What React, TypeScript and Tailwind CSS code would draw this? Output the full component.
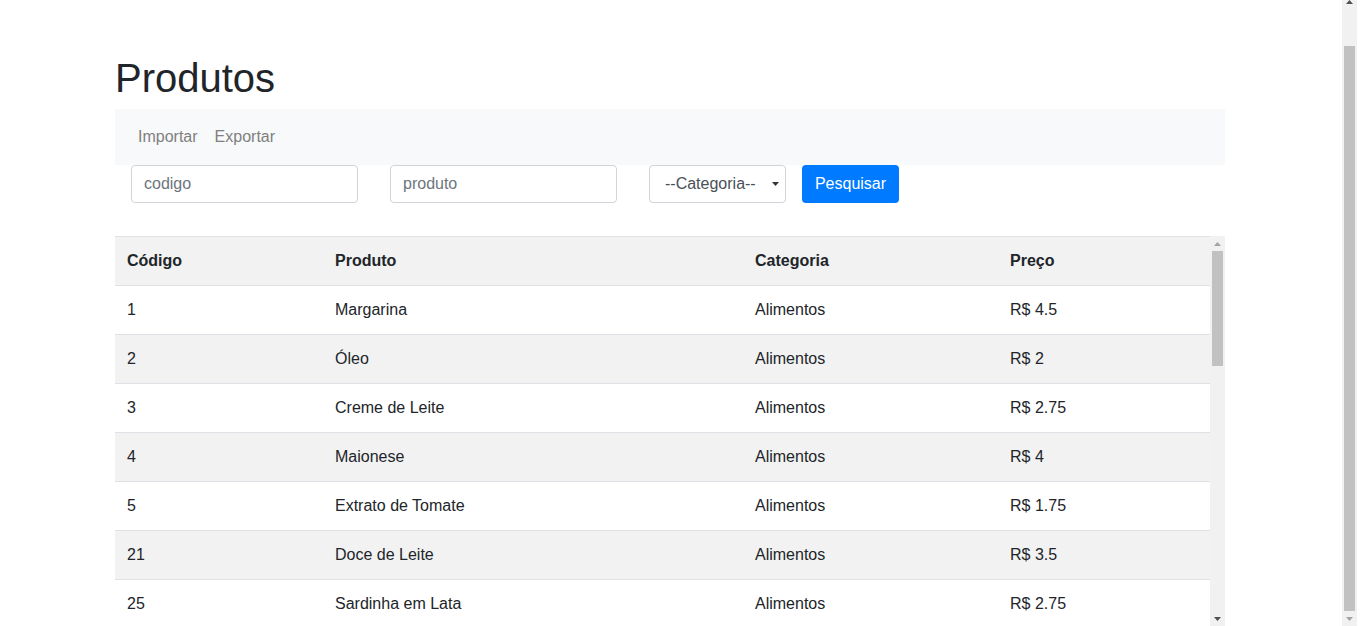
import React from "react";

interface IProduto {
    codigo: number;
    nome: string;
    categoria: string;
    preco: string;
}

const produtos: IProduto[] = [
    { codigo: 1, nome: "Margarina", categoria: "Alimentos", preco: "4.5" },
    { codigo: 2, nome: "Óleo", categoria: "Alimentos", preco: "2" },
    { codigo: 3, nome: "Creme de Leite", categoria: "Alimentos", preco: "2.75" },
    { codigo: 4, nome: "Maionese", categoria: "Alimentos", preco: "4" },
    { codigo: 5, nome: "Extrato de Tomate", categoria: "Alimentos", preco: "1.75" },
    { codigo: 21, nome: "Doce de Leite", categoria: "Alimentos", preco: "3.5" },
    { codigo: 25, nome: "Sardinha em Lata", categoria: "Alimentos", preco: "2.75" },
    { codigo: 26, nome: "Arroz", categoria: "Alimentos", preco: "12.9" },
    { codigo: 27, nome: "Feijão", categoria: "Alimentos", preco: "7.5" },
    { codigo: 28, nome: "Macarrão", categoria: "Alimentos", preco: "3.2" },
    { codigo: 29, nome: "Café", categoria: "Alimentos", preco: "9.9" },
    { codigo: 30, nome: "Açúcar", categoria: "Alimentos", preco: "3.8" },
    { codigo: 31, nome: "Refrigerante", categoria: "Bebidas", preco: "5.5" },
    { codigo: 32, nome: "Suco de Uva", categoria: "Bebidas", preco: "6.25" },
    { codigo: 33, nome: "Água Mineral", categoria: "Bebidas", preco: "1.5" },
    { codigo: 34, nome: "Cerveja", categoria: "Bebidas", preco: "3.75" },
    { codigo: 35, nome: "Detergente", categoria: "Limpeza", preco: "2.2" },
    { codigo: 36, nome: "Sabão em Pó", categoria: "Limpeza", preco: "11.9" },
    { codigo: 37, nome: "Desinfetante", categoria: "Limpeza", preco: "4.6" },
    { codigo: 38, nome: "Esponja", categoria: "Limpeza", preco: "1.9" },
    { codigo: 39, nome: "Sabonete", categoria: "Higiene", preco: "1.8" },
    { codigo: 40, nome: "Shampoo", categoria: "Higiene", preco: "8.9" },
    { codigo: 41, nome: "Creme Dental", categoria: "Higiene", preco: "3.4" },
    { codigo: 42, nome: "Papel Higiênico", categoria: "Higiene", preco: "14.5" },
];

const Arrow = ({ up, color }: { up?: boolean; color: string }) => (
    <svg width="7" height="4" viewBox="0 0 7 4" className="block">
        {up ? <polygon points="0,4 7,4 3.5,0" fill={color} /> : <polygon points="0,0 7,0 3.5,4" fill={color} />}
    </svg>
);

const cell = "px-[12px] h-[49px] p-0 text-left align-middle border-b border-[#dee2e6]";
const head = "px-[12px] h-[50px] p-0 text-left align-middle border-t border-b border-[#dee2e6] font-bold";

const App = () => {
    return (
        <div className="flex h-[626px] w-[1360px] overflow-hidden bg-white text-[16px] text-[#212529]" style={{ fontFamily: '"Liberation Sans", Arial, sans-serif' }}>
            <main className="w-[1342px] shrink-0 pt-[54px] pl-[115px]">
                <div className="w-[1110px]">
                    <h1 className="text-[40px] leading-[48px] font-normal mb-[7px]">Produtos</h1>

                    <nav className="bg-[#f8f9fa] h-[56px] px-[15px] flex items-center">
                        <a href="#" className="px-[8px] py-[8px] text-[#7f7f7f]">Importar</a>
                        <a href="#" className="ml-[1px] px-[8px] py-[8px] text-[#7f7f7f]">Exportar</a>
                    </nav>

                    <form className="flex items-center pl-[16px] h-[38px]">
                        <input placeholder="codigo" className="w-[227px] h-[38px] border border-[#ced4da] rounded-[4px] px-[12px] placeholder:text-[#6c757d] outline-none" />
                        <input placeholder="produto" className="ml-[32px] w-[227px] h-[38px] border border-[#ced4da] rounded-[4px] px-[12px] placeholder:text-[#6c757d] outline-none" />
                        <div className="relative ml-[32px]">
                            <select className="appearance-none w-[137px] h-[38px] border border-[#ced4da] rounded-[4px] pl-[15px] text-[#495057] bg-white outline-none">
                                <option>--Categoria--</option>
                            </select>
                            <span className="absolute right-[7px] top-[17px] pointer-events-none">
                                <Arrow color="#333333" />
                            </span>
                        </div>
                        <button type="button" className="ml-[16px] w-[97px] h-[38px] rounded-[4px] bg-[#007bff] text-white">Pesquisar</button>
                    </form>

                    <div className="mt-[33px] flex h-[390px]">
                        <div className="w-[1095px] overflow-hidden">
                            <table className="w-full table-fixed border-separate border-spacing-0">
                                <colgroup>
                                    <col className="w-[208px]" />
                                    <col className="w-[420px]" />
                                    <col className="w-[255px]" />
                                    <col className="w-[212px]" />
                                </colgroup>
                                <thead>
                                    <tr className="bg-[#f2f2f2]">
                                        <th className={head}>Código</th>
                                        <th className={head}>Produto</th>
                                        <th className={head}>Categoria</th>
                                        <th className={head}>Preço</th>
                                    </tr>
                                </thead>
                                <tbody>
                                    {produtos.map((p, i) => (
                                        <tr key={p.codigo} className={i % 2 === 1 ? "bg-[#f2f2f2]" : "bg-white"}>
                                            <td className={cell}>{p.codigo}</td>
                                            <td className={cell}>{p.nome}</td>
                                            <td className={cell}>{p.categoria}</td>
                                            <td className={cell}>R$ {p.preco}</td>
                                        </tr>
                                    ))}
                                </tbody>
                            </table>
                        </div>
                        {/* table scrollbar */}
                        <div className="w-[15px] bg-[#f1f1f1] flex flex-col items-center">
                            <div className="h-[15px] flex items-center justify-center"><Arrow up color="#a3a3a3" /></div>
                            <div className="w-[11px] h-[115px] bg-[#c1c1c1]" />
                            <div className="flex-1" />
                            <div className="h-[15px] flex items-center justify-center"><Arrow color="#505050" /></div>
                        </div>
                    </div>
                </div>
            </main>

            {/* page scrollbar */}
            <div className="w-[15px] shrink-0 bg-[#f1f1f1] flex flex-col items-center">
                <div className="h-[4px] flex items-start justify-center"><Arrow up color="#505050" /></div>
                <div className="h-[42px]" />
                <div className="w-[11px] h-[565px] bg-[#c1c1c1]" />
                <div className="flex-1 flex items-center justify-center"><Arrow color="#a3a3a3" /></div>
            </div>
        </div>
    );
};

export default App;
